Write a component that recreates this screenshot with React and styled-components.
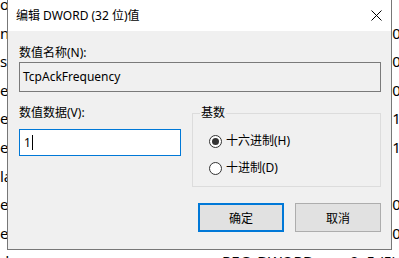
import React from 'react';
import styled, { createGlobalStyle } from 'styled-components';

const GlobalStyle = createGlobalStyle`
  html, body {
    margin: 0;
    padding: 0;
    background: #fff;
  }
  body {
    font-family: "Noto Sans", "Noto Sans CJK SC", sans-serif;
  }
`;

const Screen = styled.div`
  position: relative;
  width: 399px;
  height: 258px;
  overflow: hidden;
  background: #fff;
`;

// registry value list behind the dialog
const ValueList = styled.div`
  display: flex;
  flex-direction: column;
  margin-top: -10px;
  font-family: "Noto Sans", sans-serif;
  font-size: 15px;
  color: #000;
`;

const ValueRow = styled.div`
  display: grid;
  grid-template-columns: 222px 128px 1fr;
  height: 28.6px;
  line-height: 28.6px;
  white-space: nowrap;
`;

const Cell = styled.span`
  overflow: hidden;
`;

const Dialog = styled.div`
  position: absolute;
  left: 7px;
  top: -1px;
  width: 385px;
  height: 251px;
  box-sizing: border-box;
  border: 1px solid #777;
  background: #f0f0f0;
  display: flex;
  flex-direction: column;
  font-family: "Noto Sans", "Noto Sans CJK SC", sans-serif;
  font-size: 12px;
  color: #000;
`;

const TitleBar = styled.div`
  height: 31px;
  flex: none;
  background: #fff;
  display: flex;
  align-items: center;
  justify-content: space-between;
  padding-left: 8px;
  padding-right: 9px;
`;

const Title = styled.span`
  line-height: 16px;
`;

const CloseIcon = styled.svg`
  display: block;
  width: 11px;
  height: 11px;
`;

const Body = styled.div`
  flex: 1;
  padding: 14px 10px 18px 11px;
  display: flex;
  flex-direction: column;
`;

const Label = styled.label`
  display: block;
  height: 16px;
  line-height: 16px;
`;

const NameBox = styled.div`
  margin-top: 1px;
  height: 30px;
  box-sizing: border-box;
  border: 1px solid #7a7a7a;
  background: #f0f0f0;
  padding-left: 3px;
  line-height: 28px;
`;

const Columns = styled.div`
  margin-top: 13px;
  display: grid;
  grid-template-columns: 162px 189px;
  column-gap: 11px;
  align-items: start;
`;

const DataBox = styled.div`
  margin-top: 8px;
  height: 27px;
  box-sizing: border-box;
  border: 1px solid #0078d7;
  background: #fff;
  padding-left: 4px;
  display: flex;
  align-items: center;
  gap: 1px;
`;

const Caret = styled.span`
  display: block;
  width: 1px;
  height: 15px;
  background: #000;
`;

const Group = styled.fieldset`
  margin: 0;
  padding: 12px 0 10px 0;
  border: 1px solid #dcdcdc;
  min-width: 0;
`;

const Legend = styled.legend`
  margin-left: 7px;
  padding: 0 1px;
  line-height: 16px;
  font-size: 12px;
`;

const RadioList = styled.div`
  display: flex;
  flex-direction: column;
  gap: 11px;
  padding-left: 16px;
`;

const RadioRow = styled.div`
  display: flex;
  align-items: center;
  gap: 4px;
  height: 16px;
  line-height: 16px;
`;

const RadioDot = styled.span`
  position: relative;
  width: 13px;
  height: 13px;
  box-sizing: border-box;
  border: 1px solid #333;
  border-radius: 50%;
  background: #fff;

  &::after {
    content: '';
    display: ${(p) => (p.$checked ? 'block' : 'none')};
    position: absolute;
    left: 2px;
    top: 2px;
    width: 7px;
    height: 7px;
    border-radius: 50%;
    background: #333;
  }
`;

const ButtonBar = styled.div`
  margin-top: 16px;
  display: flex;
  justify-content: flex-end;
  gap: 11px;
`;

const Button = styled.button`
  width: 86px;
  height: 29px;
  box-sizing: border-box;
  margin: 0;
  padding: 0;
  background: #e1e1e1;
  border: ${(p) => (p.$primary ? '2px solid #0078d7' : '1px solid #adadad')};
  font-family: inherit;
  font-size: 12px;
  color: #000;
`;

const rows = [
  { name: 'o', type: 'REG_SZ', data: '' },
  { name: 'n', type: 'REG_DWORD', data: '0x00000000 (0)' },
  { name: 's', type: 'REG_DWORD', data: '0x00000000 (0)' },
  { name: 'e', type: 'REG_DWORD', data: '0x00000000 (0)' },
  { name: 'e', type: 'REG_DWORD', data: '0x00010000 (65536)' },
  { name: 'e', type: 'REG_DWORD', data: '0x00010000 (65536)' },
  { name: 'la', type: 'REG_SZ', data: '' },
  { name: 'e', type: 'REG_DWORD', data: '0x00000000 (0)' },
  { name: 'e', type: 'REG_DWORD', data: '0x00000000 (0)' },
  { name: 'd', type: 'REG_DWORD', data: '0x5 (5)' },
];

export default function App() {
  return (
    <>
      <GlobalStyle />
      <Screen>
        <ValueList>
          {rows.map((r, i) => (
            <ValueRow key={i}>
              <Cell>{r.name}</Cell>
              <Cell>{r.type}</Cell>
              <Cell>{r.data}</Cell>
            </ValueRow>
          ))}
        </ValueList>

        <Dialog>
          <TitleBar>
            <Title>编辑 DWORD (32 位)值</Title>
            <CloseIcon viewBox="0 0 11 11">
              <path d="M0.5 0.5 L10.5 10.5 M10.5 0.5 L0.5 10.5" stroke="#000" strokeWidth="1" fill="none" />
            </CloseIcon>
          </TitleBar>
          <Body>
            <Label>数值名称(N):</Label>
            <NameBox>TcpAckFrequency</NameBox>
            <Columns>
              <div>
                <Label>数值数据(V):</Label>
                <DataBox>
                  <span>1</span>
                  <Caret />
                </DataBox>
              </div>
              <Group>
                <Legend>基数</Legend>
                <RadioList>
                  <RadioRow>
                    <RadioDot $checked />
                    <span>十六进制(H)</span>
                  </RadioRow>
                  <RadioRow>
                    <RadioDot />
                    <span>十进制(D)</span>
                  </RadioRow>
                </RadioList>
              </Group>
            </Columns>
            <ButtonBar>
              <Button $primary>确定</Button>
              <Button>取消</Button>
            </ButtonBar>
          </Body>
        </Dialog>
      </Screen>
    </>
  );
}
